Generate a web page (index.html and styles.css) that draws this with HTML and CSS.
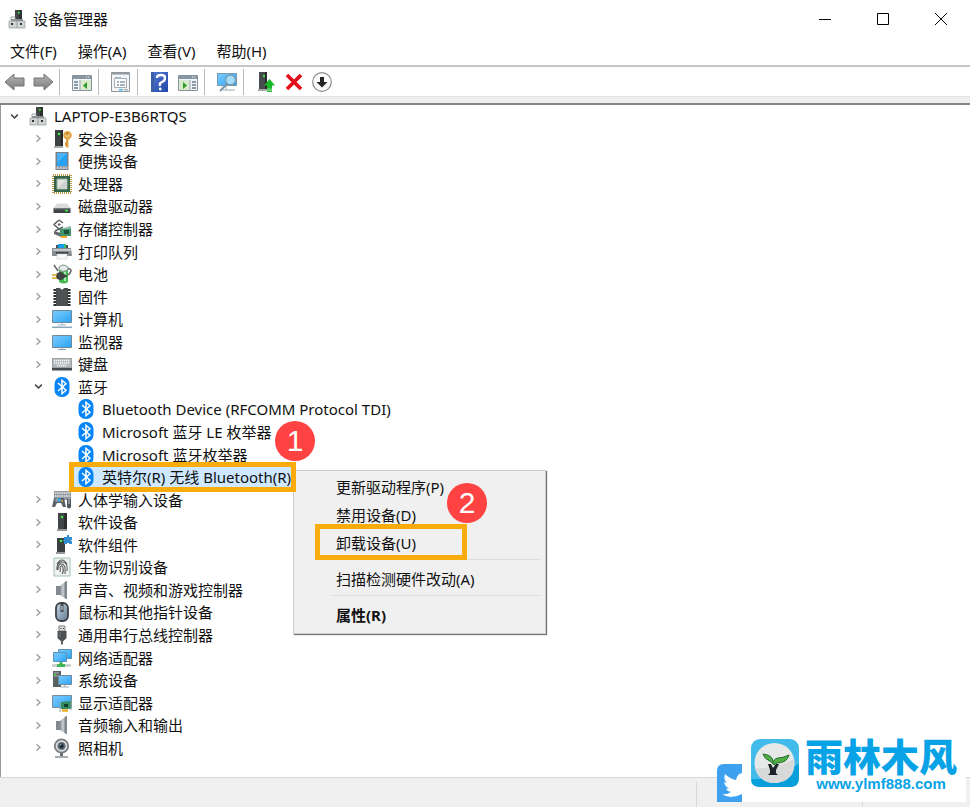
FILE: index.html
```html
<!DOCTYPE html>
<html lang="zh-CN">
<head>
<meta charset="utf-8">
<meta name="viewport" content="width=device-width, initial-scale=1">
<title>设备管理器</title>
<link rel="stylesheet" href="styles.css">
</head>
<body>
<svg class="sprite" aria-hidden="true">
  <defs>
    <linearGradient id="g-screen" x1="0" y1="0" x2="1" y2="1"><stop offset="0" stop-color="#7ccafa"/><stop offset=".5" stop-color="#55b9fb"/><stop offset="1" stop-color="#28a2f6"/></linearGradient>
    <linearGradient id="g-arrow" x1="0" y1="0" x2="0" y2="1"><stop offset="0" stop-color="#b4b4b4"/><stop offset="1" stop-color="#7d7d7d"/></linearGradient>
    <linearGradient id="g-metal" x1="0" y1="0" x2="1" y2="0"><stop offset="0" stop-color="#858b91"/><stop offset=".5" stop-color="#cdd2d6"/><stop offset="1" stop-color="#6d7379"/></linearGradient>
    <linearGradient id="g-help" x1="0" y1="0" x2="1" y2="1"><stop offset="0" stop-color="#5379d6"/><stop offset="1" stop-color="#2348a6"/></linearGradient>
    <linearGradient id="g-mouse" x1="0" y1="0" x2="1" y2="1"><stop offset="0" stop-color="#c6d8e8"/><stop offset="1" stop-color="#60788e"/></linearGradient>

    <symbol id="open" viewBox="0 0 10 10"><path d="M2 3.3 5 6.3 8 3.3" fill="none" stroke="#444" stroke-width="1.4"/></symbol>
    <symbol id="closed" viewBox="0 0 10 10"><path d="M3.2 2 6.3 5 3.2 8" fill="none" stroke="#a0a0a0" stroke-width="1.3"/></symbol>
    <symbol id="computer-root" viewBox="0 0 20 20"><path d="M8 1h7v10H8z" fill="#424646"/><path d="M12 1h3v10h-3z" fill="#2c3030"/><circle cx="12" cy="3.7" r="1" fill="#38e440"/><path d="M4 10h12v2H4z" fill="#898d90"/><path d="M2 12h8v7H2z" fill="#d1d4d4" stroke="#969b9c" stroke-width=".7"/><path d="M10 12h8v7h-8z" fill="#d1d4d4" stroke="#969b9c" stroke-width=".7"/><path d="M4 14h2v2H4zm9 0h2v2h-2z" fill="#303536"/><path d="M4 11V8h4v3" fill="none" stroke="#a0a4a5"/></symbol>
    <symbol id="security" viewBox="0 0 20 20"><path d="M3 1h8v16H3z" fill="#3c4041"/><path d="M9 1h2v16H9z" fill="#25292a"/><path d="M2 17h9v2H2z" fill="#a8abac"/><circle cx="7" cy="5" r="1.3" fill="#3dec43"/><path d="M15.300 10v8.500M15 16h-2M15 14h-2" stroke="#d69c38" stroke-width="2.200"/><circle cx="15.500" cy="6.300" r="3.300" fill="#eec179" stroke="#dfa642" stroke-width="2"/><circle cx="15.300" cy="4.800" r="1" fill="#9a6f28"/></symbol>
    <symbol id="portable" viewBox="0 0 20 20"><path d="M3.500 1h13v18h-13z" fill="#787e84"/><path d="M5 2h10v13H5z" fill="#28a2f6"/><path d="M5 2h10L5 12z" fill="#4cb3fb"/><path d="M4.500 15.500h11V18h-11z" fill="#c3c8cb"/><path d="M7 16.800h1m2 0h1m2 0h1" stroke="#666"/></symbol>
    <symbol id="cpu" viewBox="0 0 20 20"><path d="M1 1h18v18H1z" fill="none" stroke="#bf9a4b" stroke-width="2" stroke-dasharray="1 1"/><path d="M2 2h16v16H2z" fill="#356649"/><path d="M5 5h10v10H5z" fill="#e2e5e4" stroke="#8fb09a"/><path d="m5 15 10-10v10z" fill="#cdd2d1"/></symbol>
    <symbol id="disk" viewBox="0 0 20 20"><path d="M5 7.500h10l3.500 4.500H1.500z" fill="#d8dadb"/><path d="M1.500 12h17v5h-17z" fill="#3e4345"/><path d="M2 12.800h16" stroke="#8b9092"/><path d="M13 14.700h3" stroke="#34ee3c" stroke-width="1.600"/></symbol>
    <symbol id="storage" viewBox="0 0 20 20"><path d="M7 1 2 5.500 7 10l4-2M7 1l4 3M3 12l4-2 3 2" fill="none" stroke="#596163" stroke-width="1.500"/><path d="m7 4 2 1.500L7 7 5.500 5.500z" fill="#666"/><path d="m2 12 7 2v4l-7-3z" fill="#63696d"/><path d="M8 10h11v7H8z" fill="#42946c"/><path d="m8 10 11-3v3z" fill="#86bda2"/><path d="M12 11h5v4h-5z" fill="#21533e"/><path d="M9 18h6" stroke="#efad23" stroke-width="2"/></symbol>
    <symbol id="printer" viewBox="0 0 20 20"><path d="M4 3h12v5H4z" fill="#465052"/><path d="M6 2h8v4H6z" fill="#169de7"/><path d="M12 2h2v4h-2z" fill="#39c46d"/><path d="M1 6h18l1 8H0V6z" fill="#858b8e"/><path d="M1 7h18v2H1z" fill="#c2c6c8"/><path d="M4 10h12v2H4z" fill="#3f474a"/><path d="M5 12h10v5H5z" fill="#f8f8f8" stroke="#ccc" stroke-width=".6"/></symbol>
    <symbol id="battery" viewBox="0 0 20 20"><path d="M7 3h9v15q-4 3-9 0z" fill="#43b94f"/><path d="M7 3q4-4 9 0v3q-5 3-9 0z" fill="#e2e9e8" stroke="#829089"/><path d="M13 8v9" stroke="#a5edad" stroke-width="2"/><path d="m2 1 4 6M16 11q3-2 3-5-1-2-3-1" fill="none" stroke="#62686a" stroke-width="1.5"/><path d="M4 10q5-4 8 0l4 2-4 2q-3 4-8 0z" fill="#3f4345"/><path d="M0 11h5M0 14h5" stroke="#dfa51c" stroke-width="1.6"/></symbol>
    <symbol id="firmware" viewBox="0 0 20 20"><path d="M3 2v17M17 2v17" stroke="#282c2d" stroke-width="3" stroke-dasharray="2 1"/><path d="M4 1h4q2 3 4 0h4v18H4z" fill="#4b4e4f"/><path d="M7 4v14M10 4v14M13 4v14" stroke="#575a5b"/></symbol>
    <symbol id="computer" viewBox="0 0 20 20"><path d="M.5 1.5h19v12H.5z" fill="url(#g-screen)" stroke="#708a9b"/><path d="M10 14v2M6 16h8" stroke="#9ab1bf"/><path d="M0 18.3h20" stroke="#8ba8bb" stroke-width="1.5"/></symbol>
    <symbol id="monitor" viewBox="0 0 20 20"><path d="M.5 3.5h19v12H.5z" fill="url(#g-screen)" stroke="#708a9b"/><path d="M10 16v2M6 17.5h8" stroke="#8ba5b5"/></symbol>
    <symbol id="keyboard" viewBox="0 0 20 20"><path d="M0 4h20v12H0z" fill="#9ba1a5"/><path d="M1 5h18v8H1z" fill="#b4babd"/><path d="M2 6.5h16M2 9h16M5 11.5h10" stroke="#f9f9f9" stroke-width="1.5" stroke-dasharray="1.3 .7"/><path d="M0 14h20v2.500H0z" fill="#444c52"/></symbol>
    <symbol id="bluetooth" viewBox="0 0 20 20"><rect x="2.5" width="15" height="20" rx="7" fill="#0785f6"/><path d="m6 6 8 7.2-4 3.5V3.3l4 3.5L6 14" fill="none" stroke="#fff" stroke-width="1.5"/></symbol>
    <symbol id="hid" viewBox="0 0 20 20"><path d="M2 1h17v9H2z" fill="#949ba0"/><path d="M3 3h15M3 6h15" stroke="#e7e9ea" stroke-width="1.5" stroke-dasharray="1.5 .7"/><path d="m0 17 2-9h10l2 9h-3l-2-4H5l-2 4z" fill="#596269"/><circle cx="5" cy="10" r="2" fill="#8e999f"/><circle cx="7.5" cy="10" r="1.8" fill="#3aa9ee"/><circle cx="10" cy="11" r="1" fill="#e49b3a"/><path d="M15 9h4v8q-2 3-4 0z" fill="#4e575c"/><path d="M17 9v5" stroke="#c3c8cb"/></symbol>
    <symbol id="software" viewBox="0 0 20 20"><path d="M6 1h9v16H6z" fill="#414547"/><path d="M12 1h3v16h-3z" fill="#2b2e2f"/><path d="M5 17h10v2H5z" fill="#96999b"/><circle cx="10" cy="5" r="1.3" fill="#3deb42"/></symbol>
    <symbol id="component" viewBox="0 0 20 20"><path d="M5 3h8v14H5z" fill="#3b3f41"/><path d="M4 17h9v2H4z" fill="#96999b"/><circle cx="9" cy="6" r="1.3" fill="#3deb42"/><path d="M12 2h3V0h2v2h3v3h-1v1h1v3h-3V8h-2v1h-3V6h-1V5h1z" fill="#348fd2"/></symbol>
    <symbol id="finger" viewBox="0 0 20 20"><path d="M2 1h16v18H2z" fill="#eff2ef" stroke="#a0c1b6"/><path d="M5 7q5-8 10 0M5 10q1-6 6-5t4 9M6 13q0-7 4-6t3 10M8 15q1-3 0-5 2-3 3 1t-1 6M5 10v3" fill="none" stroke="#595e5c" stroke-width="1.1"/></symbol>
    <symbol id="speaker" viewBox="0 0 20 20"><path d="M4 6h4v9H4z" fill="#828990"/><path d="m8 6 6-5v18l-6-4z" fill="url(#g-metal)"/><path d="M14 1h1v18h-1z" fill="#848b91"/></symbol>
    <symbol id="mouse" viewBox="0 0 20 20"><rect x="4" y="1" width="12" height="18" rx="5" fill="url(#g-mouse)" stroke="#3d4246" stroke-width="1.8"/><path d="M10 2v8" stroke="#494f54" stroke-width="3"/><path d="M10 4v4" stroke="#dde5ec"/></symbol>
    <symbol id="usb" viewBox="0 0 20 20"><path d="M7 1h6v5H7z" fill="#dedfe0" stroke="#7b7e80"/><path d="M8.5 3h1v1h-1zm2.500 0h1v1h-1z" fill="#333"/><path d="M5.500 6h9v7l-3 3h-3l-3-3z" fill="#4d5153"/><path d="M10 15v4.500" stroke="#606465" stroke-width="2"/><path d="M8 7v5" stroke="#797d7f"/></symbol>
    <symbol id="network" viewBox="0 0 20 20"><path d="M6.5 1.5h13v9h-13z" fill="url(#g-screen)" stroke="#5b94b8"/><path d="M1.5 4.5h13v9h-13z" fill="url(#g-screen)" stroke="#5b94b8"/><path d="M0 17.500h19" stroke="#c3cac9" stroke-width="2.500"/><path d="M5 17.500h8M9 14v4" stroke="#42b654" stroke-width="3"/></symbol>
    <symbol id="system" viewBox="0 0 20 20"><path d="M1 1h8v16H1z" fill="#5a6163"/><path d="M2 3h5M2 6h5" stroke="#b2b8ba"/><circle cx="3" cy="4.500" r="1" fill="#34df37"/><path d="M6.5 5.5h13v9h-13z" fill="url(#g-screen)" stroke="#73899a"/><path d="M13 15v2M9 17h8" stroke="#9aa8b2"/></symbol>
    <symbol id="display" viewBox="0 0 20 20"><path d="M.5 2.5h19v12H.5z" fill="url(#g-screen)" stroke="#78909e"/><path d="m9 9 10-1v8H9z" fill="#368d62"/><path d="M12 11h4v3h-4z" fill="#173f2e"/><path d="M10 17.500h6" stroke="#e8ae26" stroke-width="2.500"/><path d="M8 9v10M19 7v10" stroke="#8aa59c"/></symbol>
    <symbol id="camera" viewBox="0 0 20 20"><path d="M8 15h3v3H8z" fill="#666c70"/><path d="M3 19h13" stroke="#8b9094" stroke-width="1.5"/><circle cx="9.5" cy="8" r="6.7" fill="#dfe2e4" stroke="#777d81" stroke-width="1.8"/><circle cx="9.5" cy="8" r="3.8" fill="#45515b" stroke="#838a90"/><circle cx="9.5" cy="8" r="1.5" fill="#151b23"/><circle cx="8.5" cy="7" r=".8" fill="#8bc1e4"/></symbol>

    <symbol id="back" viewBox="0 0 22 22"><path d="m1 11 9-8v4h10v8H10v4z" fill="url(#g-arrow)" stroke="#747474"/></symbol>
    <symbol id="forward" viewBox="0 0 22 22"><path d="m21 11-9-8v4H2v8h10v4z" fill="url(#g-arrow)" stroke="#747474"/></symbol>
    <symbol id="tree-pane" viewBox="0 0 22 22"><path d="M1.5 4.5h19v15h-19z" fill="#f3f6f8" stroke="#88929a"/><path d="M2 5h18v3H2z" fill="#8696a2"/><path d="M15 6h4" stroke="#fff" stroke-dasharray="1 1"/><path d="M9 9v10" stroke="#929ca4"/><path d="M3 11h4m-4 3h4m-4 3h4" stroke="#667a8b" stroke-width="1.5"/><path d="M10 9h10v10H10z" fill="#d9eacf"/><path d="m16 11-4 3.5 4 3.5z" fill="#2d9b24"/></symbol>
    <symbol id="action-pane" viewBox="0 0 22 22"><path d="M1.5 4.5h19v15h-19z" fill="#f3f6f8" stroke="#88929a"/><path d="M2 5h18v3H2z" fill="#8696a2"/><path d="M15 6h4" stroke="#fff" stroke-dasharray="1 1"/><path d="M13 9v10" stroke="#929ca4"/><path d="M15 11h4m-4 3h4m-4 3h4" stroke="#667a8b" stroke-width="1.5"/><path d="M2 9h10v10H2z" fill="#d9eacf"/><path d="m6 11 4 3.5L6 18z" fill="#2d9b24"/></symbol>
    <symbol id="properties" viewBox="0 0 22 22"><path d="M1.500 1.5h18v19h-18z" fill="#f3f5f6" stroke="#8f989e"/><path d="M2 2h17v1.500H2z" fill="#8f989e"/><path d="M4.5 7.5h12v9h-12z" fill="#fff" stroke="#a6afb5"/><path d="M7 11h2m1 0h5m-8 3h2m1 0h5" stroke="#8699a8" stroke-width="1.3"/><path d="M5 7h6" stroke="#9fb8c8" stroke-width="2"/><path d="M9 18.700h4" stroke="#42bdea" stroke-width="1.500"/><path d="M14 18.700h4" stroke="#aab5bb" stroke-width="1.500"/></symbol>
    <symbol id="help" viewBox="0 0 22 22"><path d="M2 1h17v20H2z" fill="url(#g-help)"/><path d="M2 1h3v20H2z" fill="#3d5da5"/><path d="M8 7q0-3 4-3t4 3-3 4-2 4" fill="none" stroke="#fff" stroke-width="2.3"/><circle cx="11.2" cy="18" r="1.4" fill="#fff"/></symbol>
    <symbol id="scan" viewBox="0 0 22 22"><path d="M1.5 2.5h19v12h-19z" fill="url(#g-screen)" stroke="#7699ad"/><path d="M10 15v3M7 19h12" stroke="#9aa8ae"/><circle cx="14.5" cy="9" r="5" fill="#a4ddfa" stroke="#7699ad" stroke-width="1.3"/><path d="m11 13-7 7" stroke="#7896aa" stroke-width="2"/></symbol>
    <symbol id="update" viewBox="0 0 22 22"><path d="M4 1h8v17H4z" fill="#474b4d"/><path d="M10 1h2v17h-2z" fill="#282c2d"/><path d="M3 18h9v2H3z" fill="#a5a9aa"/><circle cx="9" cy="5" r="1.2" fill="#44dd4b"/><path d="m14.500 8 5.500 6.500h-3V17h-5v-2.500H9z" fill="#17b928"/><path d="M12 18h5m-5 2.300h5" stroke="#17b928" stroke-width="1.500"/></symbol>
    <symbol id="remove" viewBox="0 0 22 22"><path d="m4 4 14 14M18 4 4 18" stroke="#e40b18" stroke-width="3.6"/></symbol>
    <symbol id="disable" viewBox="0 0 22 22"><circle cx="11" cy="11" r="9.300" fill="#fbfbfb" stroke="#8c8c8c" stroke-width="1.200"/><path d="M9 6h4v5h3.500L11 16.500 5.500 11H9z" fill="#242424"/></symbol>
  </defs>
</svg>

<div class="window">
  <header class="titlebar">
    <svg class="icon"><use href="#computer-root"/></svg>
    <h1>设备管理器</h1>
    <div class="controls">
      <button aria-label="最小化"><svg viewBox="0 0 14 14"><path d="M1 7.5h12"/></svg></button>
      <button aria-label="最大化"><svg viewBox="0 0 14 14"><path d="M1.5 1.5h11v11h-11z"/></svg></button>
      <button aria-label="关闭"><svg viewBox="0 0 14 14"><path d="m1 1 12 12M13 1 1 13"/></svg></button>
    </div>
  </header>
  <nav class="menubar">
    <button>文件(F)</button><button>操作(A)</button><button>查看(V)</button><button>帮助(H)</button>
  </nav>
  <div class="toolbar" role="toolbar">
    <button aria-label="后退"><svg><use href="#back"/></svg></button>
    <button aria-label="前进"><svg><use href="#forward"/></svg></button>
    <span class="divider"></span>
    <button aria-label="控制台树"><svg><use href="#tree-pane"/></svg></button>
    <span class="divider"></span>
    <button aria-label="属性"><svg><use href="#properties"/></svg></button>
    <span class="divider"></span>
    <button aria-label="帮助"><svg><use href="#help"/></svg></button>
    <button aria-label="操作窗格"><svg><use href="#action-pane"/></svg></button>
    <span class="divider"></span>
    <button aria-label="扫描"><svg><use href="#scan"/></svg></button>
    <span class="divider"></span>
    <button aria-label="更新"><svg><use href="#update"/></svg></button>
    <button aria-label="卸载"><svg><use href="#remove"/></svg></button>
    <button aria-label="禁用"><svg><use href="#disable"/></svg></button>
  </div>

  <main class="panel">
    <ul class="tree" role="tree">
      <li><svg class="chevron"><use href="#open"/></svg><span class="node"><svg class="icon"><use href="#computer-root"/></svg>LAPTOP-E3B6RTQS</span></li>
      <li class="category"><svg class="chevron"><use href="#closed"/></svg><span class="node"><svg class="icon"><use href="#security"/></svg>安全设备</span></li>
      <li class="category"><svg class="chevron"><use href="#closed"/></svg><span class="node"><svg class="icon"><use href="#portable"/></svg>便携设备</span></li>
      <li class="category"><svg class="chevron"><use href="#closed"/></svg><span class="node"><svg class="icon"><use href="#cpu"/></svg>处理器</span></li>
      <li class="category"><svg class="chevron"><use href="#closed"/></svg><span class="node"><svg class="icon"><use href="#disk"/></svg>磁盘驱动器</span></li>
      <li class="category"><svg class="chevron"><use href="#closed"/></svg><span class="node"><svg class="icon"><use href="#storage"/></svg>存储控制器</span></li>
      <li class="category"><svg class="chevron"><use href="#closed"/></svg><span class="node"><svg class="icon"><use href="#printer"/></svg>打印队列</span></li>
      <li class="category"><svg class="chevron"><use href="#closed"/></svg><span class="node"><svg class="icon"><use href="#battery"/></svg>电池</span></li>
      <li class="category"><svg class="chevron"><use href="#closed"/></svg><span class="node"><svg class="icon"><use href="#firmware"/></svg>固件</span></li>
      <li class="category"><svg class="chevron"><use href="#closed"/></svg><span class="node"><svg class="icon"><use href="#computer"/></svg>计算机</span></li>
      <li class="category"><svg class="chevron"><use href="#closed"/></svg><span class="node"><svg class="icon"><use href="#monitor"/></svg>监视器</span></li>
      <li class="category"><svg class="chevron"><use href="#closed"/></svg><span class="node"><svg class="icon"><use href="#keyboard"/></svg>键盘</span></li>
      <li class="category"><svg class="chevron"><use href="#open"/></svg><span class="node"><svg class="icon"><use href="#bluetooth"/></svg>蓝牙</span></li>
      <li class="device"><span class="node"><svg class="icon"><use href="#bluetooth"/></svg>Bluetooth Device (RFCOMM Protocol TDI)</span></li>
      <li class="device"><span class="node"><svg class="icon"><use href="#bluetooth"/></svg>Microsoft 蓝牙 LE 枚举器</span></li>
      <li class="device"><span class="node"><svg class="icon"><use href="#bluetooth"/></svg>Microsoft 蓝牙枚举器</span></li>
      <li class="device"><span class="node selected"><svg class="icon"><use href="#bluetooth"/></svg>英特尔(R) 无线 Bluetooth(R)<span class="badge">1</span></span></li>
      <li class="category"><svg class="chevron"><use href="#closed"/></svg><span class="node"><svg class="icon"><use href="#hid"/></svg>人体学输入设备</span></li>
      <li class="category"><svg class="chevron"><use href="#closed"/></svg><span class="node"><svg class="icon"><use href="#software"/></svg>软件设备</span></li>
      <li class="category"><svg class="chevron"><use href="#closed"/></svg><span class="node"><svg class="icon"><use href="#component"/></svg>软件组件</span></li>
      <li class="category"><svg class="chevron"><use href="#closed"/></svg><span class="node"><svg class="icon"><use href="#finger"/></svg>生物识别设备</span></li>
      <li class="category"><svg class="chevron"><use href="#closed"/></svg><span class="node"><svg class="icon"><use href="#speaker"/></svg>声音、视频和游戏控制器</span></li>
      <li class="category"><svg class="chevron"><use href="#closed"/></svg><span class="node"><svg class="icon"><use href="#mouse"/></svg>鼠标和其他指针设备</span></li>
      <li class="category"><svg class="chevron"><use href="#closed"/></svg><span class="node"><svg class="icon"><use href="#usb"/></svg>通用串行总线控制器</span></li>
      <li class="category"><svg class="chevron"><use href="#closed"/></svg><span class="node"><svg class="icon"><use href="#network"/></svg>网络适配器</span></li>
      <li class="category"><svg class="chevron"><use href="#closed"/></svg><span class="node"><svg class="icon"><use href="#system"/></svg>系统设备</span></li>
      <li class="category"><svg class="chevron"><use href="#closed"/></svg><span class="node"><svg class="icon"><use href="#display"/></svg>显示适配器</span></li>
      <li class="category"><svg class="chevron"><use href="#closed"/></svg><span class="node"><svg class="icon"><use href="#speaker"/></svg>音频输入和输出</span></li>
      <li class="category"><svg class="chevron"><use href="#closed"/></svg><span class="node"><svg class="icon"><use href="#camera"/></svg>照相机</span></li>
    </ul>

    <div class="context-menu">
      <button>更新驱动程序(P)</button>
      <button>禁用设备(D)</button>
      <button class="marked">卸载设备(U)</button>
      <hr>
      <button>扫描检测硬件改动(A)</button>
      <hr>
      <button class="default">属性(R)</button>
      <span class="badge">2</span>
    </div>
  </main>

  <footer class="statusbar"><span></span><span></span><span></span></footer>

  <div class="watermark">
    <svg class="bird" viewBox="0 0 25 38"><path d="M7 0h18v38H0V7Q0 0 7 0z" fill="#3da1f0"/><path d="M25 9q-5 1-6 7-6-1-11-6-2 5 2 9l-3-1q1 5 5 6l-3 1q2 3 5 3-4 3-9 2 8 6 20 0z" fill="#fff"/></svg>
    <div class="brand">
      <svg class="brand-logo" viewBox="0 0 48 48"><rect width="48" height="48" rx="9" fill="#42bbea"/><path d="M0 40q20 2 48-15v14q0 9-9 9H9q-9 0-9-8z" fill="#079fdb"/><circle cx="23.500" cy="24" r="20" fill="#e7e8e8"/><path d="M4 29q18 2 39-9 3 22-19 24Q8 44 4 29z" fill="#d8dada"/><path d="M17 25h3l2 4 3-4h3l-3 6v3l2 2H17l2-2v-3z" fill="#1c2429"/><path d="M22 25q0-5 5-6 5 0 11-3-2 8-12 8l-3 2q-2-3-6-5-3-1-5-6 10 1 10 8" fill="#4faf43" stroke="#276b31"/></svg>
      <div class="brand-text"><strong>雨林木风</strong><a href="#">www.ylmf888.com</a></div>
    </div>
  </div>
</div>
</body>
</html>
```
FILE: styles.css
```css
*,
*::before,
*::after { box-sizing: border-box; }

body {
  margin: 0;
  background: #fff;
  color: #111;
  font: 15px/20px "Noto Sans", "Noto Sans CJK SC", sans-serif;
}

button {
  border: 0;
  padding: 0;
  background: none;
  color: inherit;
  font: inherit;
}

.sprite {
  position: absolute;
  width: 0;
  height: 0;
}

.window {
  position: relative;
  display: flex;
  flex-direction: column;
  min-height: 100vh;
}

.icon {
  flex: none;
  width: 20px;
  height: 20px;
}

/* Title and menus */
.titlebar {
  display: flex;
  align-items: center;
  gap: 6px;
  height: 37px;
  padding-left: 7px;
}

.titlebar h1 {
  flex: 1;
  margin: 0;
  font-size: 15px;
  font-weight: 400;
}

.controls { display: flex; }

.controls button {
  display: grid;
  place-items: center;
  width: 58px;
  height: 38px;
}

.controls svg {
  width: 14px;
  height: 14px;
  fill: none;
  stroke: #000;
}

.menubar {
  display: flex;
  gap: 21px;
  height: 30px;
  padding: 0 10px;
  border-bottom: 2px solid #c6c6c8;
}

.toolbar {
  display: flex;
  align-items: center;
  height: 29px;
  padding: 0 1px;
}

.toolbar button {
  display: grid;
  place-items: center;
  width: 28px;
  height: 28px;
}

.toolbar svg {
  width: 22px;
  height: 22px;
}

.divider {
  width: 1px;
  height: 26px;
  margin: 0 8px 0 2px;
  background: #bbb;
}

/* Device tree */
.panel {
  display: flex;
  flex: 1;
  flex-direction: column;
  border-left: 1px solid #999;
}

.panel::before {
  content: "";
  height: 9px;
  margin-left: -1px;
  background: #eee;
  border-top: 1px solid #e2e2e2;
  border-bottom: 2px solid #858585;
}

.tree {
  display: grid;
  flex: 1;
  grid-auto-rows: 1fr;
  margin: 0;
  padding: 0 0 18px;
  list-style: none;
}

.tree li {
  display: flex;
  align-items: center;
}

.tree .category { padding-left: 24px; }
.tree .device { padding-left: 75px; }

.chevron {
  flex: none;
  width: 11px;
  height: 11px;
  margin: 0 8px;
}

.node {
  display: flex;
  align-items: center;
  gap: 6px;
  white-space: nowrap;
}

.selected {
  position: relative;
  z-index: 3;
}

.selected::before {
  content: "";
  position: absolute;
  z-index: -1;
  inset: -5px -5px -5px -7px;
  border: 5px solid #f9ac0c;
  background: #cde8ff;
}

.badge {
  position: absolute;
  z-index: 3;
  width: 40px;
  height: 40px;
  border-radius: 50%;
  background: #ff4343;
  color: #fff;
  font: 30px/40px "Liberation Sans", sans-serif;
  text-align: center;
}

.selected .badge {
  right: -24px;
  bottom: 26px;
}

/* Context menu */
.context-menu {
  position: absolute;
  z-index: 2;
  top: 470px;
  left: 293px;
  display: flex;
  flex-direction: column;
  width: 253px;
  padding: 3px 4px 3px 38px;
  border: 1px solid #ccc;
  background: #f0f0f0;
  box-shadow: 1px 1px 1px #777;
}

.context-menu button {
  height: 28px;
  padding: 0 0 2px 4px;
  text-align: left;
}

.context-menu hr {
  width: 100%;
  height: 1px;
  margin: 1px 0 6px;
  border: 0;
  background: #ddd;
}

.context-menu .default { font-weight: 700; }

.marked { position: relative; }

.marked::after {
  content: "";
  position: absolute;
  top: -6px;
  left: -17px;
  width: 152px;
  height: 36px;
  border: 5px solid #f9ac0c;
}

.context-menu .badge {
  top: 12px;
  left: 153px;
}

/* Status bar */
.statusbar {
  display: grid;
  grid-template-columns: 1fr 166px 108px;
  height: 30px;
  padding-top: 3px;
  border-top: 1px solid #d9d9d9;
  background: #f0f0f0;
}

.statusbar span + span { border-left: 1px solid #d8d8d8; }

/* Site watermark */
.watermark {
  position: absolute;
  right: 4px;
  bottom: 5px;
  display: flex;
  align-items: flex-end;
}

.bird {
  width: 25px;
  height: 38px;
}

.brand {
  display: flex;
  align-items: center;
  gap: 6px;
  width: 224px;
  height: 78px;
  padding-left: 9px;
  background: #fff;
}

.brand-logo {
  width: 48px;
  height: 48px;
}

.brand-text {
  display: flex;
  flex-direction: column;
  align-items: center;
}

.brand-text strong {
  color: #07a3e6;
  font: 900 38px/42px "Noto Sans CJK SC", sans-serif;
}

.brand-text a {
  color: #07a3e6;
  font: 700 15px/16px "Liberation Sans", sans-serif;
  text-decoration: none;
}
```
